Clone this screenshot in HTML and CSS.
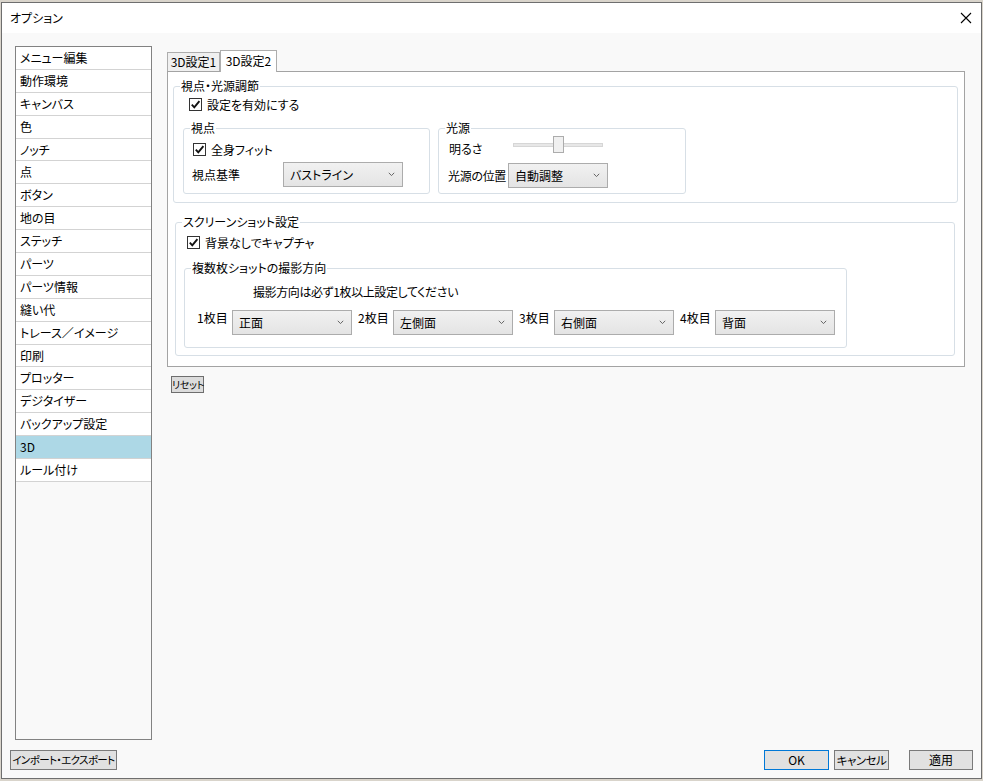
FILE: index.html
```html
<!DOCTYPE html>
<html lang="ja">
<head>
<meta charset="utf-8">
<title>オプション</title>
<link rel="stylesheet" href="styles.css">
</head>
<body>
<div class="dialog">
  <div class="titlebar">
    <span class="title">オプション</span>
    <span class="close"><svg width="12" height="12" viewBox="0 0 12 12"><path d="M1 1L11 11M11 1L1 11" stroke="#000" stroke-width="1.1" fill="none"/></svg></span>
  </div>
  <div class="content">
    <ul class="nav">
      <li>メニュー編集</li>
      <li>動作環境</li>
      <li>キャンバス</li>
      <li>色</li>
      <li>ノッチ</li>
      <li>点</li>
      <li>ボタン</li>
      <li>地の目</li>
      <li>ステッチ</li>
      <li>パーツ</li>
      <li>パーツ情報</li>
      <li>縫い代</li>
      <li>トレース／イメージ</li>
      <li>印刷</li>
      <li>プロッター</li>
      <li>デジタイザー</li>
      <li>バックアップ設定</li>
      <li class="selected">3D</li>
      <li>ルール付け</li>
    </ul>
    <div class="main">
      <div class="tabs">
        <div class="tab">3D設定1</div>
        <div class="tab active">3D設定2</div>
      </div>
      <div class="panel">
        <fieldset class="group g1">
          <legend>視点・光源調節</legend>
          <label class="check c-enable"><span class="box"><svg width="11" height="11" viewBox="0 0 11 11"><path d="M1.8 5.6L4.3 8.3L9.4 2.2" stroke="#111" stroke-width="1.9" fill="none"/></svg></span>設定を有効にする</label>
          <div class="subgroups">
            <fieldset class="group g-view">
              <legend>視点</legend>
              <label class="check c-fit"><span class="box"><svg width="11" height="11" viewBox="0 0 11 11"><path d="M1.8 5.6L4.3 8.3L9.4 2.2" stroke="#111" stroke-width="1.9" fill="none"/></svg></span>全身フィット</label>
              <div class="field-row fr-view">
                <span class="lbl lbl-view">視点基準</span>
                <div class="select w120"><span>バストライン</span><svg class="chev" width="7" height="5" viewBox="0 0 7 5"><path d="M0.8 0.8L3.5 3.6L6.2 0.8" stroke="#666" stroke-width="1" fill="none"/></svg></div>
              </div>
            </fieldset>
            <fieldset class="group g-light">
              <legend>光源</legend>
              <div class="slider-row">
                <span class="lbl lbl-bright">明るさ</span>
                <div class="slider"><div class="track"></div><div class="thumb"></div></div>
              </div>
              <div class="field-row fr-light">
                <span class="lbl lbl-pos">光源の位置</span>
                <div class="select w100"><span>自動調整</span><svg class="chev" width="7" height="5" viewBox="0 0 7 5"><path d="M0.8 0.8L3.5 3.6L6.2 0.8" stroke="#666" stroke-width="1" fill="none"/></svg></div>
              </div>
            </fieldset>
          </div>
        </fieldset>

        <fieldset class="group g2">
          <legend>スクリーンショット設定</legend>
          <label class="check c-bg"><span class="box"><svg width="11" height="11" viewBox="0 0 11 11"><path d="M1.8 5.6L4.3 8.3L9.4 2.2" stroke="#111" stroke-width="1.9" fill="none"/></svg></span>背景なしでキャプチャ</label>
          <fieldset class="group g-shots">
            <legend>複数枚ショットの撮影方向</legend>
            <div class="note">撮影方向は必ず1枚以上設定してください</div>
            <div class="shots-row">
              <span class="shot-lbl">1枚目</span>
              <div class="select w120"><span>正面</span><svg class="chev" width="7" height="5" viewBox="0 0 7 5"><path d="M0.8 0.8L3.5 3.6L6.2 0.8" stroke="#666" stroke-width="1" fill="none"/></svg></div>
              <span class="shot-lbl">2枚目</span>
              <div class="select w120"><span>左側面</span><svg class="chev" width="7" height="5" viewBox="0 0 7 5"><path d="M0.8 0.8L3.5 3.6L6.2 0.8" stroke="#666" stroke-width="1" fill="none"/></svg></div>
              <span class="shot-lbl">3枚目</span>
              <div class="select w120"><span>右側面</span><svg class="chev" width="7" height="5" viewBox="0 0 7 5"><path d="M0.8 0.8L3.5 3.6L6.2 0.8" stroke="#666" stroke-width="1" fill="none"/></svg></div>
              <span class="shot-lbl">4枚目</span>
              <div class="select w120"><span>背面</span><svg class="chev" width="7" height="5" viewBox="0 0 7 5"><path d="M0.8 0.8L3.5 3.6L6.2 0.8" stroke="#666" stroke-width="1" fill="none"/></svg></div>
            </div>
          </fieldset>
        </fieldset>
      </div>
      <div class="reset">リセット</div>
    </div>
  </div>
  <div class="footer">
    <div class="btn btn-import">インポート・エクスポート</div>
    <div class="spacer"></div>
    <div class="btn btn-ok">OK</div>
    <div class="btn btn-cancel">キャンセル</div>
    <div class="btn btn-apply">適用</div>
  </div>
</div>
</body>
</html>
```

FILE: styles.css
```css
* { box-sizing: border-box; }
html, body { margin: 0; padding: 0; }
body {
  width: 983px;
  height: 781px;
  overflow: hidden;
  background: #d9d4cb;
  font-family: "Noto Sans CJK JP", "Noto Sans", sans-serif;
  font-size: 12px;
  color: #000;
  font-feature-settings: "palt";
}
.dialog {
  margin: 2px 0 0 1px;
  width: 981px;
  height: 777px;
  border: 1px solid #6e6e6e;
  background: #f9f9f9;
  display: flex;
  flex-direction: column;
}
.titlebar {
  height: 30px;
  flex: none;
  background: #fff;
  display: flex;
  align-items: center;
  justify-content: space-between;
  padding: 0 9px 1px 8px;
}
.title { font-size: 12px; line-height: 16px; }
.close { display: flex; width: 12px; height: 12px; }
.content {
  height: 707px;
  flex: none;
  display: flex;
  gap: 15px;
  padding: 13px 0 0 13px;
}
.nav {
  list-style: none;
  margin: 0;
  padding: 0;
  width: 137px;
  height: 694px;
  border: 1px solid #828282;
  background: #f9f9f9;
}
.nav li {
  height: 22.9px;
  border-bottom: 1px solid #d3d3d3;
  background: #fff;
  padding-left: 4px;
  line-height: 21px;
  font-size: 12px;
  white-space: nowrap;
}
.nav li.selected { background: #add8e6; }
.main { width: 798px; }
.tabs {
  margin-top: 4px;
  height: 21px;
  display: flex;
  align-items: flex-end;
}
.tab {
  height: 19px;
  width: 53px;
  border: 1px solid #adadad;
  border-bottom: 0;
  background: #f0f0f0;
  text-align: center;
  line-height: 18px;
  font-size: 12px;
  white-space: nowrap;
}
.tab.active {
  height: 22px;
  width: 57px;
  margin-bottom: -1px;
  background: #fff;
  line-height: 20px;
  position: relative;
  z-index: 1;
}
.panel {
  height: 296px;
  border: 1px solid #a3a3a3;
  background: #fff;
  padding: 6px 0 0 5px;
}
.group {
  margin: 0;
  padding: 0;
  border: 1px solid #d7dfe6;
  border-radius: 3px;
  min-width: 0;
}
.group > legend {
  padding: 0 1px;
  margin-left: 6px;
  line-height: 16px;
  font-size: 12px;
}
.check {
  display: flex;
  align-items: center;
  height: 16px;
  gap: 5px;
  white-space: nowrap;
}
.box {
  width: 13px;
  height: 13px;
  border: 1px solid #333;
  background: #fff;
  display: flex;
  align-items: center;
  justify-content: center;
  flex: none;
}
.g1 { width: 785px; padding-bottom: 8px; }
.c-enable { margin: 2px 0 0 15px; }
.subgroups {
  display: flex;
  gap: 8px;
  margin: 8px 0 0 9px;
}
.g-view { width: 247px; }
.g-light { width: 248px; }
.c-fit { margin: 5px 0 0 9px; }
.field-row { display: flex; align-items: center; }
.fr-view { margin: 5px 0 6px 8px; }
.fr-light { margin: 10px 0 0 9px; }
.lbl { line-height: 16px; white-space: nowrap; flex: none; }
.lbl-view { width: 91px; }
.lbl-pos { width: 60px; letter-spacing: -0.3px; }
.lbl-bright { width: 64px; margin-top: 5px; }
.slider-row {
  display: flex;
  align-items: flex-start;
  height: 17px;
  margin-left: 10px;
}
.slider { position: relative; width: 90px; height: 17px; }
.track {
  margin-top: 7px;
  height: 4px;
  border: 1px solid #d6d6d6;
  background: #e7e7e7;
}
.thumb {
  position: absolute;
  left: 40px;
  top: 0;
  width: 11px;
  height: 17px;
  border: 1px solid #acacac;
  background: #f0f0f0;
}
.select {
  display: flex;
  align-items: center;
  justify-content: space-between;
  height: 25px;
  padding: 0 7px 1px 6px;
  border: 1px solid #acacac;
  background: linear-gradient(#f1f1f1, #e4e4e4);
  font-size: 12px;
  white-space: nowrap;
  flex: none;
}
.w120 { width: 120px; }
.w100 { width: 100px; }
.chev { flex: none; }
.g2 { width: 780px; margin: 11px 0 0 2px; padding-bottom: 7px; }
.c-bg { margin: 4px 0 0 11px; }
.g-shots { width: 663px; margin: 10px 0 0 8px; padding-bottom: 12px; }
.note { margin: 8px 0 0 68px; line-height: 16px; letter-spacing: -0.4px; }
.shots-row {
  display: flex;
  align-items: flex-start;
  margin: 10px 0 0 12px;
}
.shot-lbl { width: 35px; line-height: 16px; white-space: nowrap; flex: none; }
.shots-row .select + .shot-lbl { margin-left: 6px; }
.reset {
  margin: 9px 0 0 4px;
  width: 33px;
  height: 17px;
  border: 1px solid #6e6e6e;
  background: #dcdcdc;
  font-size: 10px;
  line-height: 15px;
  text-align: center;
  white-space: nowrap;
  letter-spacing: -0.3px;
}
.footer {
  margin-top: 10px;
  height: 20px;
  display: flex;
  padding: 0 8px;
}
.spacer { flex: 1; }
.btn {
  height: 20px;
  border: 1px solid #7a7a7a;
  background: #e1e1e1;
  font-size: 12px;
  line-height: 18px;
  text-align: center;
  white-space: nowrap;
}
.btn-import { width: 107px; font-size: 10.5px; letter-spacing: -0.6px; }
.btn-ok { width: 65px; border-color: #0078d7; }
.btn-cancel { width: 55px; margin-left: 5px; font-size: 11.5px; letter-spacing: -0.5px; }
.btn-apply { width: 64px; margin-left: 20px; }
```
